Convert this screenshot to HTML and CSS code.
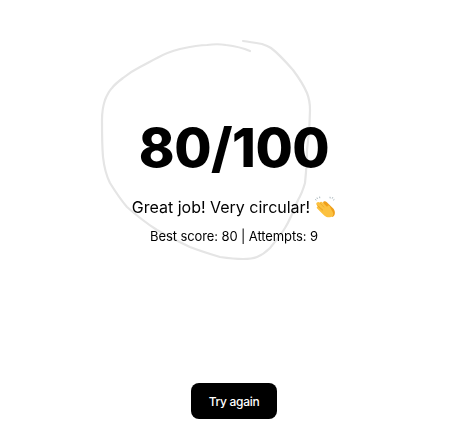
FILE: index.html
```html
<!DOCTYPE html>
<html lang="en">
<head>
<meta charset="utf-8">
<title>Draw a circle</title>
<link rel="stylesheet" href="styles.css">
</head>
<body>
<main class="result">
  <h1 class="score">80/100</h1>
  <p class="message">Great job! Very circular!<svg class="clap" viewBox="0 0 22 22" aria-hidden="true">
      <path class="spark" d="M3 1.6 3.4 3M5.6 .6 5.8 2.2M1.2 3.4 2.4 4.2M16 .8 16.2 2.4M18.8 1.2 18.2 2.6M20.4 3.4 19.2 4.2"/>
      <path class="hand-back" d="M9 6.5 C9.5 5 11.5 5 12.6 6 L19 12.2 C21.6 15 21.6 19 18.6 21 L11 14 Z"/>
      <path class="hand-front" d="M3 6.6 C3.8 5.7 5 6 5.6 6.7 C6.2 5.6 7.8 5.6 8.6 6.5 L13.2 11 C13.2 9.8 14.8 9 15.8 10.2 C16.4 12 17.2 13.6 18.4 15.4 C20 18 19.2 20.2 17 21 C14.4 21.9 12.2 21 10.2 19.4 C7.8 17.4 5.4 15 3.2 12.6 C2.3 11.6 2.8 10.4 3.9 10.2 L2.8 9 C2 8 2.2 7.2 3 6.6 Z"/>
      <path class="crease" d="M5.6 6.7 10.2 11.4M3.9 10.2 8.6 14.8M2.8 9 9 14"/>
    </svg></p>
  <p class="stats">Best score: 80 | Attempts: 9</p>
</main>
<svg class="drawing" viewBox="0 0 458 438" aria-hidden="true">
  <path class="stroke" d="M243 41 C250 42 256 43 262 44 C265 45 268 46 271 48 C279 54 286 62 293 70 C299 78 304 86 307 93 C309 98 310 104 310 110 C310 124 309 137 307 150 C307 162 306 173 305 183 C303 190 301 195 298 200 C294 210 290 220 285 228 C280 236 275 242 270 248 C266 252 262 255 257 257 C252 259 248 259 243 259 C235 259 227 258 220 257 C210 254 200 251 190 247 C179 242 168 236 157 230 C146 223 136 215 127 207 C120 199 115 191 110 183 C106 175 104 166 103 157 C102 145 102 132 102 120 C102 113 103 106 105 100 C107 95 109 91 112 88 C115 84 119 81 123 78 C128 74 134 70 140 67 C146 64 151 61 157 58 C164 54 172 51 180 49 C189 47 198 45 207 45 C214 44 220 44 226 45 C234 46 243 48 250 51"/>
</svg>
<button class="again" type="button">Try again</button>
</body>
</html>
```

FILE: styles.css
```css
* {
  box-sizing: border-box;
}

html,
body {
  height: 100%;
}

body {
  margin: 0;
  padding-left: 10px;
  position: relative;
  overflow: hidden;
  background: #fff;
  color: #000;
  font-family: Inter, "Liberation Sans", sans-serif;
  display: flex;
  flex-direction: column;
  align-items: center;
}

.drawing {
  position: absolute;
  inset: 0;
  width: 100%;
  height: 100%;
  pointer-events: none;
}

.stroke {
  fill: none;
  stroke: #e5e5e5;
  stroke-width: 2.2;
  stroke-linecap: round;
  stroke-linejoin: round;
  mix-blend-mode: multiply;
}

.result {
  padding-top: 114px;
  text-align: center;
  flex: 1;
}

.score {
  margin: 0;
  font-size: 54px;
  line-height: 68px;
  font-weight: 800;
  letter-spacing: -0.5px;
}

.message {
  margin: 13px 0 0;
  font-size: 16px;
  line-height: 24px;
  display: flex;
  align-items: center;
  justify-content: center;
  gap: 4px;
}

.clap {
  width: 22px;
  height: 22px;
}

.spark {
  fill: none;
  stroke: #a9b6bc;
  stroke-width: 1;
}

.hand-back {
  fill: #ef9f1a;
}

.hand-front {
  fill: #fcc13f;
}

.crease {
  fill: none;
  stroke: #e0981d;
  stroke-width: 0.5;
}

.stats {
  margin: 7px 0 0;
  font-size: 13px;
  line-height: 20px;
  letter-spacing: -0.1px;
}

.again {
  position: relative;
  width: 86px;
  height: 36px;
  margin-bottom: 19px;
  border: 0;
  border-radius: 8px;
  background: #000;
  color: #fff;
  font-family: inherit;
  font-size: 12px;
  font-weight: 500;
  letter-spacing: -0.3px;
}
```
